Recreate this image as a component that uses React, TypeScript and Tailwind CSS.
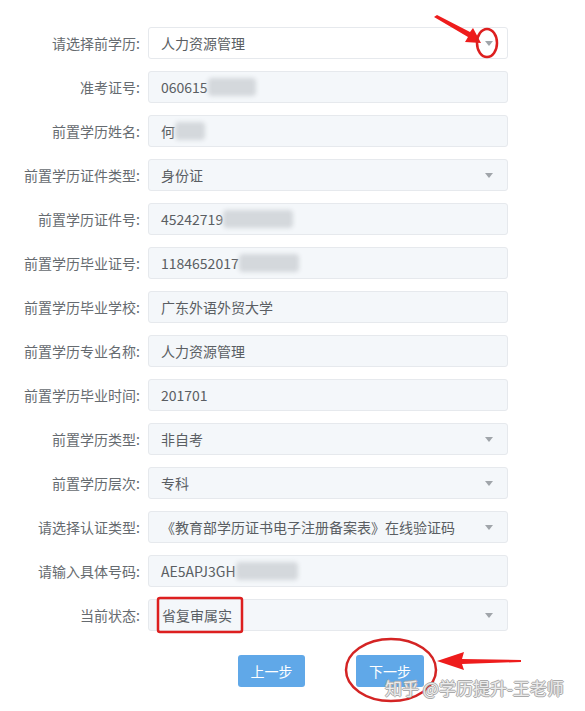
import React from "react";

type Row = {
  label: string;
  value: string;
  select?: boolean;
  white?: boolean;
  blur?: number; // width of masked part
  boxed?: boolean;
};

const rows: Row[] = [
  { label: "请选择前学历:", value: "人力资源管理", select: true, white: true },
  { label: "准考证号:", value: "060615", blur: 48 },
  { label: "前置学历姓名:", value: "何", blur: 30 },
  { label: "前置学历证件类型:", value: "身份证", select: true },
  { label: "前置学历证件号:", value: "45242719", blur: 70 },
  { label: "前置学历毕业证号:", value: "1184652017", blur: 60 },
  { label: "前置学历毕业学校:", value: "广东外语外贸大学" },
  { label: "前置学历专业名称:", value: "人力资源管理" },
  { label: "前置学历毕业时间:", value: "201701" },
  { label: "前置学历类型:", value: "非自考", select: true },
  { label: "前置学历层次:", value: "专科", select: true },
  { label: "请选择认证类型:", value: "《教育部学历证书电子注册备案表》在线验证码", select: true },
  { label: "请输入具体号码:", value: "AE5APJ3GH", blur: 62 },
  { label: "当前状态:", value: "省复审属实", select: true, boxed: true },
];

function Caret() {
  return (
    <svg width="8" height="5" viewBox="0 0 8 5" className="shrink-0">
      <path d="M0 0h8L4 5z" fill="#a0a5aa" />
    </svg>
  );
}

function Field({ row }: { row: Row }) {
  return (
    <div className="flex items-center h-8">
      <div className="w-[140px] shrink-0 text-right text-[14px] text-[#666b70]">{row.label}</div>
      <div
        className={`ml-2 w-[360px] h-8 flex items-center rounded-[3px] border border-[#e6e9ed] pl-[12px] pr-[14px] text-[14px] text-[#5a5e63] ${
          row.white ? "bg-white" : "bg-[#f4f7fa]"
        } ${row.boxed ? "pl-[13px]" : ""}`}
      >
        <span className="whitespace-nowrap">{row.value}</span>
        {row.blur ? (
          <span
            className="inline-block h-[18px] bg-[#d4d8dc] blur-[2px] rounded-sm"
            style={{ width: row.blur }}
          />
        ) : null}
        <span className="flex-1" />
        {row.select ? <Caret /> : null}
      </div>
    </div>
  );
}

export default function App() {
  return (
    <div
      className="relative w-[585px] h-[711px] bg-white overflow-hidden"
      style={{ fontFamily: '"Noto Sans CJK SC", "Noto Sans", sans-serif' }}
    >
      <div className="flex flex-col gap-3 pt-[27px]">
        {rows.map((r) => (
          <Field key={r.label} row={r} />
        ))}
      </div>

      {/* Buttons */}
      <div className="flex mt-[24px] pl-[238px] gap-[51px]">
        <button className="w-[67px] h-8 rounded-[3px] bg-[#60a8e8] text-white text-[14px]">上一步</button>
        <button className="w-[68px] h-8 rounded-[3px] bg-[#60a8e8] text-white text-[14px]">下一步</button>
      </div>

      {/* Red annotations */}
      <svg className="absolute inset-0 pointer-events-none" width="585" height="711">
        <polygon points="434,17 437,15 470,32 473,28 481,43 465,42 468,37" fill="#ee1c1c" />
        <ellipse cx="487" cy="43" rx="10" ry="14" fill="none" stroke="#dd1f1f" strokeWidth="2.5" />
        <rect x="158" y="598" width="84" height="34" rx="2" fill="none" stroke="#dd1f1f" strokeWidth="2.5" />
        <ellipse cx="391" cy="670" rx="45" ry="31" fill="none" stroke="#d42424" strokeWidth="2.5" />
        <polygon points="437,661 464,652 462,659 521,660 521,662 462,664 464,670" fill="#ee1c1c" />
      </svg>

      {/* Watermark */}
      <div
        className="absolute left-[385px] top-[675px] text-[17px] text-[#ececec] whitespace-nowrap"
        style={{ textShadow: "1px 0 0 #aaa, -1px 0 0 #aaa, 0 1px 0 #aaa, 0 -1px 0 #aaa" }}
      >
        知乎 @学历提升-王老师
      </div>
    </div>
  );
}
